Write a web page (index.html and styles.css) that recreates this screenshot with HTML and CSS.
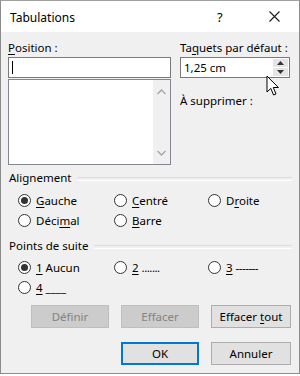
FILE: index.html
```html
<!DOCTYPE html>
<html lang="fr">
<head>
    <meta charset="UTF-8">
    <title>Tabulations</title>
    <link rel="stylesheet" href="styles.css">
</head>
<body>
    <div class="window">
        <div class="titlebar">
            <span class="title">Tabulations</span>
            <span class="help">?</span>
            <span class="close">
                <svg width="11" height="11" viewBox="0 0 11 11"><path d="M0.5 0.5 L10.5 10.5 M10.5 0.5 L0.5 10.5" stroke="#1a1a1a" stroke-width="1.1" fill="none"/></svg>
            </span>
        </div>

        <div class="content">
            <div class="top-row">
                <div class="col-left">
                    <div class="label"><u>P</u>osition :</div>
                    <div class="text-input"><span class="caret"></span></div>
                    <div class="listbox">
                        <div class="scrollbar">
                            <svg width="9" height="6" viewBox="0 0 9 6"><path d="M0.5 5 L4.5 1 L8.5 5" stroke="#a6a6a6" stroke-width="1.4" fill="none"/></svg>
                            <svg width="9" height="6" viewBox="0 0 9 6"><path d="M0.5 1 L4.5 5 L8.5 1" stroke="#a6a6a6" stroke-width="1.4" fill="none"/></svg>
                        </div>
                    </div>
                </div>
                <div class="col-right">
                    <div class="label">Ta<u>q</u>uets par défaut :</div>
                    <div class="spin">
                        <span class="spin-value">1,25 cm</span>
                        <div class="spin-buttons">
                            <div class="spin-btn"><svg width="7" height="4" viewBox="0 0 7 4"><path d="M0 4 L3.5 0 L7 4 Z" fill="#333"/></svg></div>
                            <div class="spin-btn"><svg width="7" height="4" viewBox="0 0 7 4"><path d="M0 0 L3.5 4 L7 0 Z" fill="#333"/></svg></div>
                        </div>
                    </div>
                    <div class="label sub-label">À supprimer :</div>
                </div>
            </div>

            <div class="group-title">Alignement</div>
            <div class="radio-grid">
                <label class="radio checked"><span class="dot"></span><span><u>G</u>auche</span></label>
                <label class="radio"><span class="dot"></span><span><u>C</u>entré</span></label>
                <label class="radio"><span class="dot"></span><span>D<u>r</u>oite</span></label>
                <label class="radio"><span class="dot"></span><span>Déci<u>m</u>al</span></label>
                <label class="radio"><span class="dot"></span><span><u>B</u>arre</span></label>
            </div>

            <div class="group-title second">Points de suite</div>
            <div class="radio-grid">
                <label class="radio checked"><span class="dot"></span><span><u>1</u> Aucun</span></label>
                <label class="radio"><span class="dot"></span><span><u>2</u> <span class="leader">.......</span></span></label>
                <label class="radio"><span class="dot"></span><span><u>3</u> <span class="leader">-------</span></span></label>
                <label class="radio"><span class="dot"></span><span><u>4</u> ____</span></label>
            </div>

            <div class="button-row">
                <button class="btn disabled">Définir</button>
                <button class="btn disabled">Effacer</button>
                <button class="btn">Effacer <u>t</u>out</button>
            </div>
            <div class="button-row last">
                <button class="btn default">OK</button>
                <button class="btn">Annuler</button>
            </div>
        </div>

        <!-- mouse pointer over the spin box -->
        <svg class="pointer" width="14" height="22" viewBox="0 0 14 22">
            <path d="M1 1 L1 17 L4.8 13.4 L7.6 20 L10 19 L7.3 12.5 L12.4 12.5 Z" fill="#fff" stroke="#000" stroke-width="1" stroke-linejoin="round"/>
        </svg>
    </div>
</body>
</html>
```

FILE: styles.css
```css
/* Reset and base styles */
* {
    margin: 0;
    padding: 0;
    box-sizing: border-box;
}

body {
    background-color: #ffffff;
    font-family: 'Segoe UI', 'Noto Sans', sans-serif;
    font-size: 11.5px;
    color: #000;
}

u {
    text-decoration: underline;
    text-underline-offset: 2px;
}

/* Dialog window */
.window {
    position: relative;
    width: 300px;
    height: 374px;
    border: 1px solid #8c8c8c;
    border-top-color: #a0a0a0;
    background-color: #f0f0f0;
}

.titlebar {
    display: flex;
    align-items: center;
    height: 31px;
    background-color: #ffffff;
    padding-left: 9px;
}

.title {
    flex: 1;
    font-size: 12px;
    padding-top: 1px;
}

.help {
    width: 14px;
    margin-right: 38px;
    font-size: 13px;
}

.close {
    display: flex;
    margin-right: 19px;
}

.content {
    padding: 8px 7px 0 7px;
}

.label {
    line-height: 15px;
    height: 15px;
    white-space: nowrap;
}

/* Top row: position + default stops */
.top-row {
    display: flex;
    gap: 9px;
}

.col-left {
    width: 163px;
}

.col-right {
    flex: 1;
}

.text-input {
    display: flex;
    align-items: center;
    height: 21px;
    margin-top: 2px;
    background-color: #fff;
    border: 1px solid #7a7a7a;
    padding-left: 3px;
}

.caret {
    width: 1px;
    height: 13px;
    background-color: #000;
}

.listbox {
    display: flex;
    justify-content: flex-end;
    height: 86px;
    margin-top: 1px;
    background-color: #fff;
    border: 1px solid #828790;
}

.scrollbar {
    width: 17px;
    background-color: #f0f0f0;
    display: flex;
    flex-direction: column;
    justify-content: space-between;
    align-items: center;
    padding: 9px 0 8px;
}

.spin {
    display: flex;
    align-items: center;
    height: 21px;
    margin-top: 2px;
    margin-right: 2px;
    background-color: #fff;
    border: 1px solid #7a7a7a;
    padding-left: 3px;
}

.spin-value {
    flex: 1;
}

.spin-buttons {
    display: flex;
    flex-direction: column;
    gap: 1px;
    width: 15px;
    height: 17px;
    margin-right: 1px;
}

.spin-btn {
    flex: 1;
    display: flex;
    align-items: center;
    justify-content: center;
    background-color: #e5e5e5;
}

.sub-label {
    margin-top: 15px;
}

/* Groups */
.group-title {
    display: flex;
    align-items: center;
    gap: 6px;
    line-height: 15px;
    margin-top: 5px;
    padding-left: 1px;
}

.group-title::after {
    content: "";
    flex: 1;
    height: 2px;
    margin-top: 2px;
    border-top: 1px solid #dcdcdc;
    border-bottom: 1px solid #ffffff;
}

.group-title.second {
    margin-top: 8px;
}

.radio-grid {
    display: grid;
    grid-template-columns: 96px 94px auto;
    grid-auto-rows: 20px;
    padding-left: 10px;
    margin-top: 5px;
}

.group-title.second + .radio-grid {
    margin-top: 4px;
}

.radio {
    display: flex;
    align-items: center;
    gap: 5px;
    white-space: nowrap;
}

.dot {
    width: 13px;
    height: 13px;
    border: 1px solid #333;
    border-radius: 50%;
    background-color: #fff;
    display: flex;
    align-items: center;
    justify-content: center;
}

.radio.checked .dot::after {
    content: "";
    width: 7px;
    height: 7px;
    border-radius: 50%;
    background-color: #333;
}

.leader {
    letter-spacing: -0.5px;
}

/* Buttons */
.button-row {
    display: flex;
    justify-content: flex-end;
    gap: 12px;
    margin-top: 8px;
    padding-right: 1px;
}

.button-row.last {
    margin-top: 14px;
}

.btn {
    width: 78px;
    height: 23px;
    font-family: inherit;
    font-size: 11.5px;
    color: #000;
    background-color: #e1e1e1;
    border: 1px solid #adadad;
}

.btn:last-child {
    width: 80px;
}

.btn.disabled {
    color: #838383;
    background-color: #cccccc;
    border-color: #bfbfbf;
}

.btn.default {
    border: 1px solid #0078d7;
    box-shadow: inset 0 0 0 1px #0078d7;
}

.pointer {
    position: absolute;
    left: 265px;
    top: 74px;
}
```
